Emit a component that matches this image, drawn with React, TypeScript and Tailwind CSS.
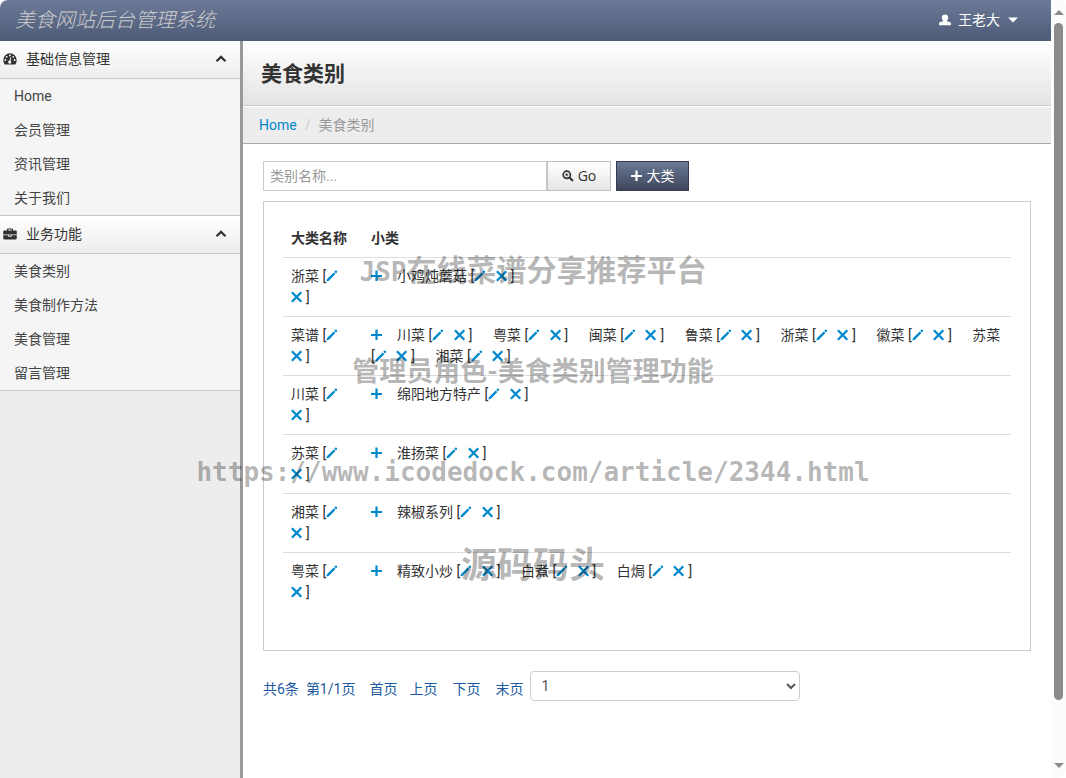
import { useState } from 'react'
import type { ReactNode } from 'react'

interface MenuGroup {
  title: string
  icon: ReactNode
  items: string[]
}

interface Category {
  name: string
  children: string[]
}

const categories: Category[] = [
  { name: '浙菜', children: ['小鸡炖蘑菇'] },
  {
    name: '菜谱',
    children: ['川菜', '粤菜', '闽菜', '鲁菜', '浙菜', '徽菜', '苏菜', '湘菜'],
  },
  { name: '川菜', children: ['绵阳地方特产'] },
  { name: '苏菜', children: ['淮扬菜'] },
  { name: '湘菜', children: ['辣椒系列'] },
  { name: '粤菜', children: ['精致小炒', '白煮', '白焗'] },
]

function DashboardIcon() {
  return (
    <svg viewBox="0 0 14 12" className="h-3 w-3.5">
      <path
        d="M7 .3a6.7 6.7 0 0 0-6.7 6.7c0 1.6.4 3 1.2 4.2.1.2.3.3.6.3h9.8c.3 0 .5-.1.6-.3.8-1.2 1.2-2.6 1.2-4.2A6.7 6.7 0 0 0 7 .3z"
        fill="#333"
      />
      <g fill="#fff">
        <circle cx="2.4" cy="7" r="0.9" />
        <circle cx="3.7" cy="3.8" r="0.9" />
        <circle cx="7" cy="2.4" r="0.9" />
        <circle cx="10.3" cy="3.8" r="0.9" />
        <circle cx="11.6" cy="7" r="0.9" />
        <path d="M7.5 4.2l.9.3-.9 3.3a1.5 1.5 0 1 1-.9-.2z" />
      </g>
    </svg>
  )
}

function BriefcaseIcon() {
  return (
    <svg viewBox="0 0 14 12" className="h-3 w-3.5">
      <path
        d="M4 2.5V1.4C4 .8 4.4.4 5 .4h4c.6 0 1 .4 1 1v1.1h2.6c.7 0 1.2.5 1.2 1.2v2.8H.2V3.7c0-.7.5-1.2 1.2-1.2zM5.2 2.5h3.6v-.9H5.2zM.2 7.3h5v.9c0 .3.2.5.5.5h2.6c.3 0 .5-.2.5-.5v-.9h5v2.9c0 .7-.5 1.2-1.2 1.2H1.4c-.7 0-1.2-.5-1.2-1.2zM6.1 7.3h1.8v.7H6.1z"
        fill="#333"
        fillRule="evenodd"
      />
    </svg>
  )
}

function ChevronIcon({ open }: { open: boolean }) {
  return (
    <svg
      viewBox="0 0 12 8"
      className={open ? 'h-2 w-3' : 'h-2 w-3 rotate-180'}
    >
      <path
        d="M1.5 6.3L6 1.9l4.5 4.4"
        fill="none"
        stroke="#333"
        strokeWidth="2.2"
      />
    </svg>
  )
}

function UserIcon() {
  return (
    <svg viewBox="0 0 12 12" className="h-3 w-3">
      <path
        d="M6 .5c2 0 3.200 1.300 3.200 3 0 1.300-.6 2.500-1.300 3.200v.6l3 .8c.6.2 1 .7 1 1.300v1.900H.1V9.400c0-.6.4-1.100 1-1.300l3-.8v-.6C3.400 6 2.800 4.800 2.800 3.500 2.800 1.800 4 .5 6 .5z"
        fill="#fff"
      />
    </svg>
  )
}

function ZoomIcon() {
  return (
    <svg viewBox="0 0 12 12" className="h-3 w-3">
      <circle cx="4.8" cy="4.8" r="3.6" fill="none" stroke="#333" strokeWidth="1.7" />
      <path d="M7.5 7.5l3.4 3.4" stroke="#333" strokeWidth="2.1" />
      <path d="M4.8 3.2v3.2M3.2 4.8h3.2" stroke="#333" strokeWidth="1" />
    </svg>
  )
}

function PlusIcon() {
  return (
    <svg viewBox="0 0 12 12" className="inline-block h-3 w-3 align-[-1px]">
      <path d="M5.5.5v10.5M0 6h11" stroke="currentColor" strokeWidth="2.2" />
    </svg>
  )
}

function PencilIcon() {
  return (
    <svg viewBox="0 0 12 12" className="inline-block h-3 w-3 align-[-1px]">
      <path
        d="M.3 11.6l.8-2.7 6.6-6.5 1.7 1.700-6.500 6.600zM8.300 1.800l1-1c.4-.4.8-.4 1.200-.1l.5.500c.4.400.300.800-.1 1.200l-1 1z"
        fill="currentColor"
      />
    </svg>
  )
}

function RemoveIcon() {
  return (
    <svg viewBox="0 0 12 12" className="inline-block h-3 w-3 align-[-1px]">
      <path
        d="M.9 1.300l9.400 9.400M10.300 1.300L.9 10.700"
        stroke="currentColor"
        strokeWidth="2.300"
      />
    </svg>
  )
}

const menu: MenuGroup[] = [
  {
    title: '基础信息管理',
    icon: <DashboardIcon />,
    items: ['Home', '会员管理', '资讯管理', '关于我们'],
  },
  {
    title: '业务功能',
    icon: <BriefcaseIcon />,
    items: ['美食类别', '美食制作方法', '美食管理', '留言管理'],
  },
]

function Header() {
  return (
    <header className="flex h-[41px] items-center justify-between rounded-tl-lg bg-linear-to-b from-[#6c7a98] to-[#4e5b77] pr-[33px] pb-0.5 pl-[15px]">
      <a href="#" className="text-xl font-light text-[#ccc] italic">
        美食网站后台管理系统
      </a>
      <button type="button" className="flex items-center text-white">
        <UserIcon />
        <span className="mr-2 ml-[7px]">王老大</span>
        <svg viewBox="0 0 10 6" className="h-1.5 w-2.5">
          <path d="M0 .5h10L5 5.5z" fill="#fff" />
        </svg>
      </button>
    </header>
  )
}

function Sidebar() {
  const [closed, setClosed] = useState<string[]>([])

  function toggle(title: string) {
    setClosed((state) =>
      state.includes(title)
        ? state.filter((t) => t !== title)
        : [...state, title],
    )
  }

  return (
    <aside className="w-[243px] shrink-0 border-r-3 border-[#999] bg-[#ededed]">
      {menu.map((group) => (
        <section key={group.title}>
          <button
            type="button"
            onClick={() => toggle(group.title)}
            className="flex h-[38px] w-full items-center border-b border-[#c8c8c8] bg-linear-to-b from-white to-[#ededed] pr-[13px] pb-0.5 pl-[3px]"
          >
            {group.icon}
            <span className="ml-[9px] flex-1 text-left">{group.title}</span>
            <ChevronIcon open={!closed.includes(group.title)} />
          </button>
          {!closed.includes(group.title) && (
            <ul className="border-b border-[#c8c8c8] bg-[#f5f5f5] text-[#444]">
              {group.items.map((item) => (
                <li key={item}>
                  <a href="#" className="block px-3.5 leading-[34px]">
                    {item}
                  </a>
                </li>
              ))}
            </ul>
          )}
        </section>
      ))}
    </aside>
  )
}

function EditableName({ name }: { name: string }) {
  return (
    <>
      <span className="whitespace-nowrap">{name}</span>{' '}
      <span className="mr-1.5 whitespace-nowrap">
        [
        <button type="button" aria-label={`编辑${name}`} className="text-[#08c]">
          <PencilIcon />
        </button>
      </span>{' '}
      <span className="whitespace-nowrap">
        <button
          type="button"
          aria-label={`删除${name}`}
          className="mr-[3px] text-[#08c]"
        >
          <RemoveIcon />
        </button>
        ]
      </span>
    </>
  )
}

function CategoryTable() {
  return (
    <table className="w-full table-fixed leading-[21px]">
      <thead>
        <tr className="text-left">
          <th className="w-20 p-2 font-bold">大类名称</th>
          <th className="p-2 font-bold">小类</th>
        </tr>
      </thead>
      <tbody>
        {categories.map((category) => (
          <tr key={category.name} className="border-t border-[#ddd] align-top">
            <td className="p-2">
              <EditableName name={category.name} />
            </td>
            <td className="p-2">
              <button
                type="button"
                aria-label="添加小类"
                className="mr-3.5 text-[#08c]"
              >
                <PlusIcon />
              </button>
              {category.children.map((child) => (
                <span key={child}>
                  <EditableName name={child} />
                  <span className="mr-[17px]"> </span>
                </span>
              ))}
            </td>
          </tr>
        ))}
      </tbody>
    </table>
  )
}

function Pagination() {
  return (
    <div className="mt-5 flex items-end leading-6 text-[#1d5aa0]">
      <span>共6条</span>
      <span className="ml-[7px]">第1/1页</span>
      <a href="#" className="ml-3.5">
        首页
      </a>
      <a href="#" className="ml-3">
        上页
      </a>
      <a href="#" className="ml-[15px]">
        下页
      </a>
      <a href="#" className="ml-[15px]">
        末页
      </a>
      <select
        aria-label="页码"
        className="ml-[7px] h-[30px] w-[270px] rounded-[4px] border border-[#ccc] bg-white pl-1.5 text-[#555]"
      >
        <option>1</option>
      </select>
    </div>
  )
}

function Content() {
  return (
    <main className="min-w-0 flex-1 bg-white">
      <div className="flex h-[65px] items-center border-b border-[#c8c8c8] bg-linear-to-b from-white to-[#e4e4e4] px-[18px] pt-0.5">
        <h1 className="text-[21px] font-bold">美食类别</h1>
      </div>
      <nav className="flex h-[38px] items-center border-t border-b border-t-white border-b-[#aaa] bg-[#ededed] px-4">
        <a href="#" className="text-[#08c]">
          Home
        </a>
        <span className="mx-2 text-[#ccc]">/</span>
        <span className="text-[#999]">美食类别</span>
      </nav>
      <div className="px-5 pt-[17px] pb-10">
        <form className="flex" onSubmit={(e) => e.preventDefault()}>
          <input
            type="text"
            aria-label="类别名称"
            placeholder="类别名称..."
            className="h-[30px] w-[284px] border border-[#ccc] bg-white px-1.5 outline-none placeholder:text-[#999]"
          />
          <button
            type="submit"
            className="flex h-[30px] w-16 items-center justify-center gap-1 border border-[#c0c0c0] bg-linear-to-b from-white to-[#e6e6e6] font-['Open_Sans']"
          >
            <ZoomIcon />
            Go
          </button>
          <button
            type="button"
            className="ml-[5px] flex h-[30px] w-[73px] items-center justify-center gap-1 border border-[#353c4e] bg-linear-to-b from-[#6b7996] to-[#3f475b] text-white"
          >
            <PlusIcon />
            大类
          </button>
        </form>
        <div className="mt-[10px] border border-[#ccc] px-[19px] pt-[18px] pb-[39px]">
          <CategoryTable />
        </div>
        <Pagination />
      </div>
    </main>
  )
}

function ScrollBar() {
  return (
    <div className="sticky top-0 flex h-screen w-[15px] shrink-0 flex-col items-center rounded-r-lg bg-[#fcfcfc] py-[10px]">
      <svg viewBox="0 0 10 5" className="h-[5px] w-[10px]">
        <path d="M5 0l5 5H0z" fill="#8b8b8b" />
      </svg>
      <div className="my-2 w-[9px] flex-1">
        <div className="h-[calc(100%-55px)] rounded-full bg-[#8b8b8b]" />
      </div>
      <svg viewBox="0 0 10 5" className="h-[5px] w-[10px]">
        <path d="M0 0h10L5 5z" fill="#8b8b8b" />
      </svg>
    </div>
  )
}

function Watermark() {
  return (
    <div className="pointer-events-none absolute inset-x-0 top-[221px] flex flex-col items-center font-bold whitespace-nowrap text-black/30">
      <p className="text-[30px] leading-[100px]">
        <span className="font-['DejaVu_Sans_Mono'] text-[26px]">JSP</span>
        在线菜谱分享推荐平台
      </p>
      <p className="text-[27px] leading-[100px]">
        管理员角色-美食类别管理功能
      </p>
      <p className="font-['DejaVu_Sans_Mono'] text-[26px] leading-[100px]">
        https://www.icodedock.com/article/2344.html
      </p>
      <p className="text-4xl leading-[88px]">源码码头</p>
    </div>
  )
}

export default function App() {
  return (
    <div className="relative flex min-h-screen bg-white font-[Roboto,'Noto_Sans_CJK_SC',sans-serif] text-sm text-[#333]">
      <div className="flex min-w-0 flex-1 flex-col">
        <Header />
        <div className="flex flex-1">
          <Sidebar />
          <Content />
        </div>
      </div>
      <ScrollBar />
      <Watermark />
    </div>
  )
}
